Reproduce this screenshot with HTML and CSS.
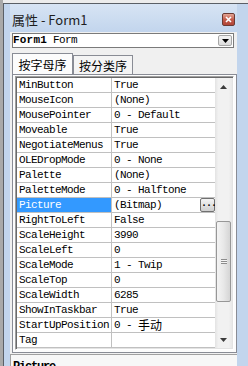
FILE: index.html
```html
<!DOCTYPE html>
<html lang="zh">
<head>
    <meta charset="utf-8">
    <title>属性 - Form1</title>
    <link rel="stylesheet" href="styles.css">
</head>
<body>
    <div class="screen">
        <div class="window">
            <div class="titlebar">
                <span class="title">属性 - Form1</span>
                <span class="close">
                    <svg width="7" height="7" viewBox="0 0 7 7"><path d="M1 1L6 6M6 1L1 6" stroke="#fff" stroke-width="1.6"/></svg>
                </span>
            </div>

            <div class="panel">
                <div class="combo">
                    <span class="combo-text"><b>Form1</b> Form</span>
                    <span class="drop">
                        <svg width="7" height="4" viewBox="0 0 7 4"><path d="M0 0H7L3.5 4Z" fill="#000"/></svg>
                    </span>
                </div>

                <div class="tabs">
                    <div class="tab active">按字母序</div>
                    <div class="tab">按分类序</div>
                </div>

                <div class="page">
                    <div class="grid">
                        <div class="rows">
                            <div class="row"><div class="name">MinButton</div><div class="value">True</div></div>
                            <div class="row"><div class="name">MouseIcon</div><div class="value">(None)</div></div>
                            <div class="row"><div class="name">MousePointer</div><div class="value">0 - Default</div></div>
                            <div class="row"><div class="name">Moveable</div><div class="value">True</div></div>
                            <div class="row"><div class="name">NegotiateMenus</div><div class="value">True</div></div>
                            <div class="row"><div class="name">OLEDropMode</div><div class="value">0 - None</div></div>
                            <div class="row"><div class="name">Palette</div><div class="value">(None)</div></div>
                            <div class="row"><div class="name">PaletteMode</div><div class="value">0 - Halftone</div></div>
                            <div class="row selected">
                                <div class="name">Picture</div>
                                <div class="value">(Bitmap)<span class="dots">...</span></div>
                            </div>
                            <div class="row"><div class="name">RightToLeft</div><div class="value">False</div></div>
                            <div class="row"><div class="name">ScaleHeight</div><div class="value">3990</div></div>
                            <div class="row"><div class="name">ScaleLeft</div><div class="value">0</div></div>
                            <div class="row"><div class="name">ScaleMode</div><div class="value">1 - Twip</div></div>
                            <div class="row"><div class="name">ScaleTop</div><div class="value">0</div></div>
                            <div class="row"><div class="name">ScaleWidth</div><div class="value">6285</div></div>
                            <div class="row"><div class="name">ShowInTaskbar</div><div class="value">True</div></div>
                            <div class="row"><div class="name">StartUpPosition</div><div class="value">0 - <span class="cjk">手动</span></div></div>
                            <div class="row"><div class="name">Tag</div><div class="value"></div></div>
                        </div>

                        <div class="scrollbar">
                            <div class="arrow">
                                <svg width="7" height="4" viewBox="0 0 7 4"><path d="M3.5 0L7 4H0Z" fill="#3c3c3c"/></svg>
                            </div>
                            <div class="track">
                                <div class="thumb"><span class="grip"></span></div>
                            </div>
                            <div class="arrow">
                                <svg width="7" height="4" viewBox="0 0 7 4"><path d="M0 0H7L3.5 4Z" fill="#3c3c3c"/></svg>
                            </div>
                        </div>
                    </div>
                </div>

                <div class="desc"><b>Picture</b></div>
            </div>
        </div>
    </div>
</body>
</html>
```

FILE: styles.css
```css
* {
    box-sizing: border-box;
}

html,
body {
    margin: 0;
}

body {
    width: 248px;
    height: 366px;
    overflow: hidden;
    background: #f0f0f0;
    font-family: "Noto Sans CJK SC", sans-serif;
}

.screen {
    height: 366px;
    padding: 3px 0 0 3px;
    background: linear-gradient(to right, #a9a9a9 0 3px, #ececec 3px);
}

.window {
    height: 363px;
    display: flex;
    flex-direction: column;
    padding: 0 11px 0 6px;
    border-top: 1px solid #5a5f66;
    border-left: 1px solid #5a5f66;
    background: #c2d5ed;
}

.titlebar {
    height: 28px;
    flex: none;
    display: flex;
    align-items: center;
    justify-content: space-between;
    padding: 2px 2px 0 2px;
    background: linear-gradient(#d7e4f4, #c2d5ed);
}

.title {
    font-size: 13px;
    color: #1e1e1e;
}

.close {
    width: 13px;
    height: 13px;
    display: flex;
    align-items: center;
    justify-content: center;
    border: 1px solid #6b3a33;
    border-radius: 2px;
    background: linear-gradient(#e3a595, #c45c4c 50%, #b04436);
}

.panel {
    flex: 1;
    display: flex;
    flex-direction: column;
    padding-top: 1px;
    background: #f0f0f0;
}

.combo {
    height: 15px;
    margin: 0 3px 0 2px;
    display: flex;
    align-items: center;
    border: 1px solid #7a7a7a;
    background: #fff;
    font-family: "Liberation Mono", monospace;
    font-size: 11px;
    letter-spacing: -0.6px;
}

.combo-text {
    flex: 1;
    line-height: 13px;
}

.combo-text b {
    letter-spacing: 0.2px;
}

.drop {
    width: 14px;
    height: 11px;
    margin-right: 1px;
    display: flex;
    align-items: center;
    justify-content: center;
    border: 1px solid #a7a7a7;
    border-radius: 2px;
    background: linear-gradient(#f4f4f4, #dcdcdc);
}

.tabs {
    margin: 5px 0 0 2px;
    display: flex;
    align-items: flex-end;
}

.tab {
    width: 60px;
    height: 19px;
    display: flex;
    align-items: center;
    justify-content: center;
    border: 1px solid #898c95;
    border-bottom: none;
    background: #f4f4f4;
    font-size: 12px;
    color: #000;
}

.tab.active {
    width: 61px;
    height: 21px;
    background: #fcfcfc;
}

.page {
    flex: none;
    margin-left: 2px;
    padding: 1px 2px 2px 2px;
    border: 1px solid #898c95;
    background: #fcfcfc;
}

.grid {
    display: flex;
    padding: 1px;
    border: 1px solid;
    border-color: #a0a0a0 #ffffff #ffffff #a0a0a0;
    box-shadow: inset 1px 1px #696969, inset -1px -1px #e3e3e3;
    background: #fff;
}

.rows {
    flex: 1;
    font-family: "Liberation Mono", "Noto Sans CJK SC", monospace;
    font-size: 11px;
    letter-spacing: -0.6px;
    color: #000;
}

.row {
    height: 15px;
    display: flex;
    line-height: 14px;
    border-bottom: 1px solid #c0c0c0;
}

.name {
    width: 95px;
    padding-left: 2px;
    border-right: 1px solid #c0c0c0;
    white-space: nowrap;
}

.value {
    flex: 1;
    display: flex;
    padding-left: 2px;
    white-space: pre;
}

.selected .name {
    background: #3399ff;
    color: #fff;
}

.cjk {
    font-family: "Noto Sans CJK SC", sans-serif;
    font-size: 12px;
    letter-spacing: 0;
}

.dots {
    width: 15px;
    height: 14px;
    margin-left: auto;
    border: 1px solid #707070;
    border-radius: 2px;
    background: linear-gradient(#f4f4f4, #e2e2e2 50%, #cfcfcf);
    font-weight: bold;
    font-size: 10px;
    line-height: 10px;
    letter-spacing: -1px;
    text-align: center;
}

.scrollbar {
    width: 17px;
    display: flex;
    flex-direction: column;
    background: linear-gradient(to right, #e3e3e3, #f1f1f1 20%, #f1f1f1 80%, #e8e8e8);
}

.arrow {
    height: 17px;
    display: flex;
    align-items: center;
    justify-content: center;
}

.track {
    flex: 1;
    padding: 126px 1px 0 1px;
}

.thumb {
    height: 81px;
    display: flex;
    align-items: center;
    justify-content: center;
    border: 1px solid #979797;
    border-radius: 2px;
    background: linear-gradient(to right, #f4f4f4, #e8e8e8 50%, #d5d5d5);
}

.grip {
    width: 6px;
    height: 5px;
    border-top: 1px solid #8c8c8c;
    border-bottom: 1px solid #8c8c8c;
    background: linear-gradient(#f4f4f4 0 1px, #8c8c8c 1px 2px, #f4f4f4 2px);
}

.desc {
    flex: 1;
    margin-top: 1px;
    padding: 5px 2px 0 2px;
    border-top: 1px solid #a0a0a0;
    border-left: 1px solid #a0a0a0;
    background: #f7f7f7;
    font-family: "Liberation Mono", monospace;
    font-size: 12px;
    line-height: 14px;
    letter-spacing: -1.2px;
}
```
